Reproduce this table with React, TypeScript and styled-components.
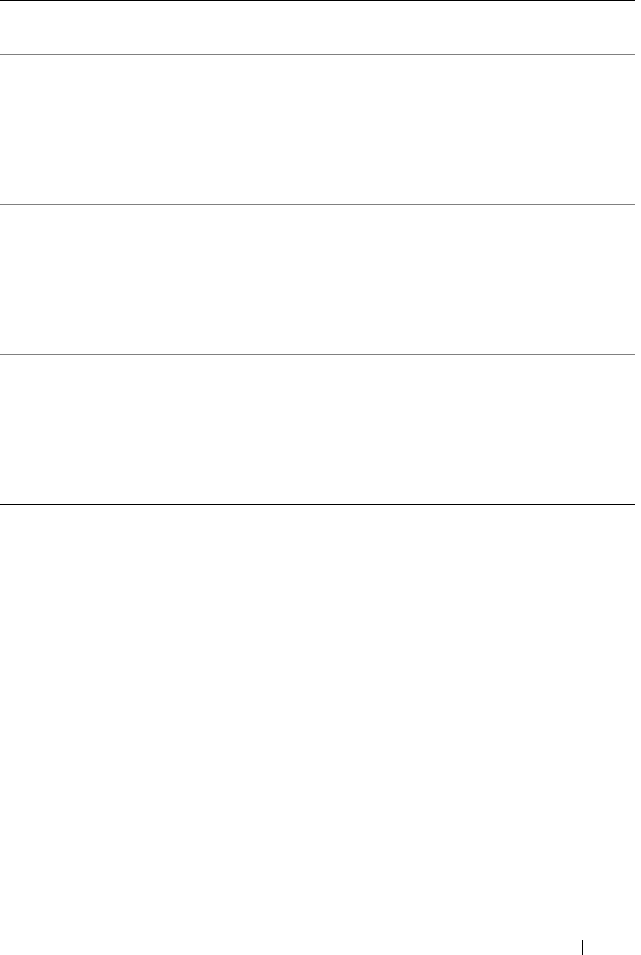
import styled, { createGlobalStyle } from 'styled-components';

const GlobalStyle = createGlobalStyle`
	html,
	body {
		margin: 0;
		padding: 0;
		background: #fff;
		font-family: 'Liberation Serif', serif;
	}
`;

const Page = styled.div`
	display: flex;
	flex-direction: column;
	width: 641px;
	height: 955px;
	overflow: hidden;
`;

const Table = styled.div`
	display: flex;
	flex-direction: column;
	width: 635px;
	border-top: 1px solid #000;
	border-bottom: 1px solid #000;
`;

const Row = styled.div<{ $height: number; $last?: boolean }>`
	display: grid;
	grid-template-columns: 1fr 1fr;
	height: ${({ $height }) => $height}px;
	border-bottom: ${({ $last }) => ($last ? 'none' : '1px solid #808080')};
	box-sizing: border-box;
`;

const Cell = styled.div`
	padding: 8px;
	font-size: 14px;
	color: #000;
`;

const Footer = styled.div`
	display: flex;
	justify-content: flex-end;
	margin-top: auto;
	padding-right: 58px;
`;

const PageRule = styled.span`
	display: block;
	width: 1px;
	height: 15px;
	background: #000;
`;

const rows = [
	{ height: 54 },
	{ height: 150 },
	{ height: 150 },
	{ height: 149, last: true },
];

const App = () => {
	return (
		<>
			<GlobalStyle />
			<Page>
				<Table>
					{rows.map((row, i) => (
						<Row key={i} $height={row.height} $last={row.last}>
							<Cell />
							<Cell />
						</Row>
					))}
				</Table>
				<Footer>
					<PageRule />
				</Footer>
			</Page>
		</>
	);
};

export default App;
